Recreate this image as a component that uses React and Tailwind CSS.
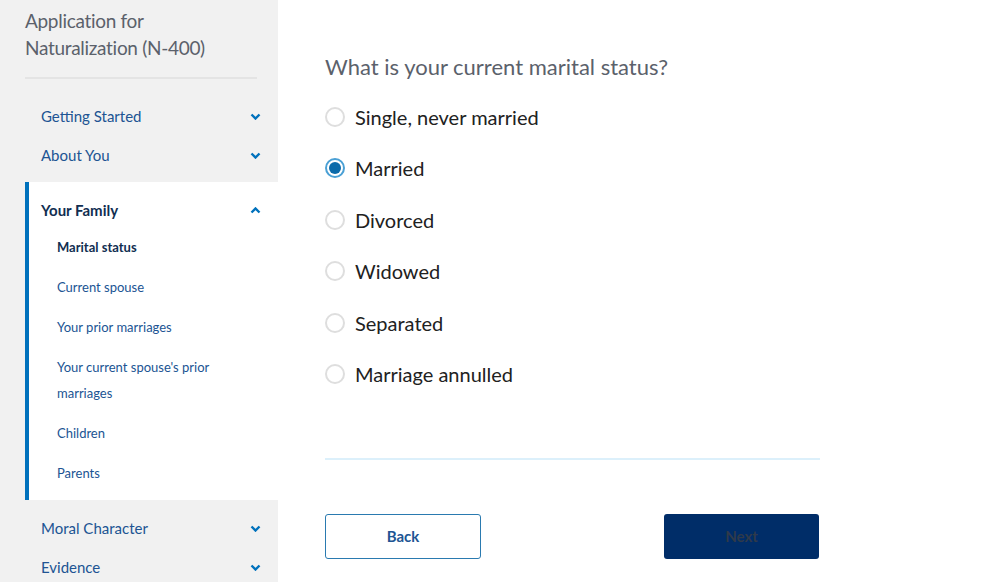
import React from 'react';

const font = { fontFamily: 'Lato, "Source Sans Pro", "Liberation Sans", sans-serif' };

function Chevron({ up }) {
  return (
    <svg width="11" height="7" viewBox="0 0 11 7" className="text-[#0071bc]">
      <polyline
        points={up ? '1.5,5.5 5.5,1.5 9.5,5.5' : '1.5,1.5 5.5,5.5 9.5,1.5'}
        fill="none"
        stroke="currentColor"
        strokeWidth="2.4"
      />
    </svg>
  );
}

function NavRow({ label }) {
  return (
    <div className="h-[39px] flex items-center justify-between pl-[41px] pr-[17px] text-[15px] text-[#205493]">
      <span>{label}</span>
      <Chevron />
    </div>
  );
}

export default function App() {
  const subItems = [
    { label: 'Marital status', active: true },
    { label: 'Current spouse' },
    { label: 'Your prior marriages' },
    { label: "Your current spouse's prior marriages" },
    { label: 'Children' },
    { label: 'Parents' },
  ];

  const options = [
    'Single, never married',
    'Married',
    'Divorced',
    'Widowed',
    'Separated',
    'Marriage annulled',
  ];

  return (
    <div className="flex w-[1000px] h-[582px] overflow-hidden bg-white" style={font}>
      {/* SIDEBAR */}
      <aside className="w-[278px] shrink-0 bg-[#f1f1f1]">
        <div className="pt-[7px] pl-[25px] pr-[21px]">
          <h1 className="text-[19px] tracking-[-0.3px] leading-[27px] text-[#5b616b] pb-[16px] border-b-2 border-[#e4e4e4]">
            Application for
            <br />
            Naturalization (N-400)
          </h1>
        </div>

        <div className="pt-[18px]">
          <NavRow label="Getting Started" />
          <NavRow label="About You" />

          <div className="mt-[7px] mb-[9px] ml-[25px] bg-white border-l-4 border-[#0071bc] pb-[7px]">
            <div className="flex items-center justify-between pl-[12px] pr-[17px] pt-[16px] pb-[5px] leading-[24px] text-[15px] font-bold text-[#112e51]">
              <span>Your Family</span>
              <Chevron up />
            </div>
            {subItems.map((item) => (
              <div
                key={item.label}
                className={`pl-[28px] pr-[40px] py-[7px] leading-[26px] text-[13px] ${
                  item.active ? 'font-bold text-[#112e51]' : 'text-[#205493]'
                }`}
              >
                {item.label}
              </div>
            ))}
          </div>

          <NavRow label="Moral Character" />
          <NavRow label="Evidence" />
        </div>
      </aside>

      {/* MAIN */}
      <main className="pl-[47px] pt-[52px]">
        <div className="w-[495px]">
          <h2 className="text-[22px] leading-[30px] text-[#5b616b]">
            What is your current marital status?
          </h2>

          <div className="mt-[9px]">
            {options.map((opt) => {
              const checked = opt === 'Married';
              return (
                <label key={opt} className="h-[51.5px] flex items-center gap-[10px] cursor-pointer">
                  {checked ? (
                    <span className="w-[20px] h-[20px] rounded-full border-2 border-[#4aa0d5] bg-white flex items-center justify-center">
                      <span className="w-[12px] h-[12px] rounded-full bg-[#0b6aaa]" />
                    </span>
                  ) : (
                    <span className="w-[20px] h-[20px] rounded-full border-2 border-[#dedede] bg-white" />
                  )}
                  <span className="text-[20px] text-[#212121]">{opt}</span>
                </label>
              );
            })}
          </div>

          <div className="mt-[58px] h-[2px] bg-[#dcf0fb]" />

          <div className="mt-[54px] flex justify-between">
            <button className="w-[156px] h-[45px] rounded-[3px] border-[1.5px] border-[#2a7ab0] bg-white text-[15px] font-bold text-[#205493]">
              Back
            </button>
            <button className="w-[155px] h-[45px] mr-[1px] rounded-[3px] bg-[#002d68] text-[15px] font-bold text-[#2f3a4a]">
              Next
            </button>
          </div>
        </div>
      </main>
    </div>
  );
}
